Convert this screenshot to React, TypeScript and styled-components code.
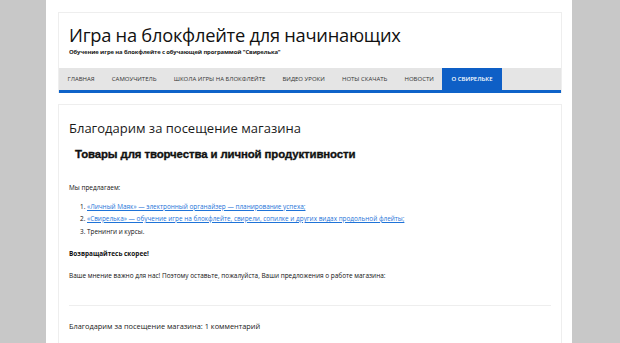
import React from "react";
import styled, { createGlobalStyle } from "styled-components";

const Global = createGlobalStyle`
  html, body { margin: 0; padding: 0; background: #c8c8c8; }
  body { font-family: "Open Sans", "Noto Sans", sans-serif; color: #222; }
  * { box-sizing: border-box; }
`;

const Page = styled.div`
  margin-left: 46px;
  width: 526px;
  min-height: 343px;
  background: #fff;
  padding: 12px 10px 0 12px;
  display: flex;
  flex-direction: column;
  gap: 11px;
`;

const Header = styled.header`
  border: 1px solid #eee;
  border-bottom: none;
  display: flex;
  flex-direction: column;
`;

const Brand = styled.div`
  padding: 10px 10px 11px;
  display: flex;
  flex-direction: column;
`;

const SiteTitle = styled.h1`
  margin: 0;
  font-size: 18.3px;
  line-height: 24px;
  font-weight: 400;
  color: #111;
  letter-spacing: -0.25px;
`;

const Tagline = styled.div`
  font-size: 5.9px;
  font-weight: 700;
  line-height: 10px;
  color: #1a1a1a;
  letter-spacing: -0.12px;
`;

const Nav = styled.nav`
  display: flex;
  background: #e5e5e5;
  border-bottom: 3px solid #0e63c9;
  height: 25px;
`;

const NavItem = styled.a<{ $active?: boolean }>`
  display: flex;
  align-items: center;
  padding: 0 ${(p) => (p.$active ? "9px" : "8.6px")};
  font-size: 6px;
  text-transform: uppercase;
  color: ${(p) => (p.$active ? "#fff" : "#333")};
  background: ${(p) => (p.$active ? "#0e5fc6" : "transparent")};
  font-weight: ${(p) => (p.$active ? 600 : 400)};
  text-decoration: none;
  white-space: nowrap;
`;

const Content = styled.main`
  border: 1px solid #eee;
  border-bottom: none;
  padding: 14px 10px 0;
  flex: 1;
  display: flex;
  flex-direction: column;
`;

const PostTitle = styled.h2`
  margin: 0;
  font-size: 13px;
  line-height: 18px;
  font-weight: 400;
  color: #1a1a1a;
`;

const Promo = styled.h3`
  margin: 9px 0 0 6px;
  font-family: "Liberation Sans", Arial, sans-serif;
  font-size: 11.4px;
  line-height: 16px;
  font-weight: 700;
  color: #111;
  letter-spacing: -0.1px;
  -webkit-text-stroke: 0.35px #111;
`;

const Para = styled.p<{ $bold?: boolean; $gap?: number }>`
  margin: ${(p) => p.$gap ?? 0}px 0 0;
  font-size: 6.45px;
  line-height: 12.5px;
  font-weight: ${(p) => (p.$bold ? 700 : 400)};
  color: #111;
`;

const List = styled.ol`
  margin: 6px 0 10px;
  padding-left: 18px;
  font-size: 6.4px;
  line-height: 12.5px;
  color: #111;
`;

const Link = styled.a`
  color: #1e73d8;
  text-decoration: underline;
`;

const Sep = styled.hr`
  border: none;
  border-top: 1px solid #eee;
  margin: 23px 0 0;
`;

const Comments = styled.h4`
  margin: 14px 0 0;
  font-size: 7.4px;
  line-height: 12px;
  font-weight: 400;
  color: #1a1a1a;
`;

export default function App() {
  const nav = [
    "Главная",
    "Самоучитель",
    "Школа игры на блокфлейте",
    "Видео уроки",
    "Ноты скачать",
    "Новости",
  ];
  return (
    <>
      <Global />
      <Page>
        <Header>
          <Brand>
            <SiteTitle>Игра на блокфлейте для начинающих</SiteTitle>
            <Tagline>Обучение игре на блокфлейте с обучающей программой "Свирелька"</Tagline>
          </Brand>
          <Nav>
            {nav.map((n) => (
              <NavItem key={n}>{n}</NavItem>
            ))}
            <NavItem $active>О Свирельке</NavItem>
          </Nav>
        </Header>
        <Content>
          <PostTitle>Благодарим за посещение магазина</PostTitle>
          <Promo>Товары для творчества и личной продуктивности</Promo>
          <Para $gap={20}>Мы предлагаем:</Para>
          <List>
            <li>
              <Link>«Личный Маяк» — электронный органайзер — планирование успеха;</Link>
            </li>
            <li>
              <Link>«Свирелька» — обучение игре на блокфлейте, свирели, сопилке и других видах продольной флейты;</Link>
            </li>
            <li>Тренинги и курсы.</li>
          </List>
          <Para $bold>Возвращайтесь скорее!</Para>
          <Para $gap={9}>
            Ваше мнение важно для нас! Поэтому оставьте, пожалуйста, Ваши предложения о работе магазина:
          </Para>
          <Sep />
          <Comments>Благодарим за посещение магазина: 1 комментарий</Comments>
        </Content>
      </Page>
    </>
  );
}
